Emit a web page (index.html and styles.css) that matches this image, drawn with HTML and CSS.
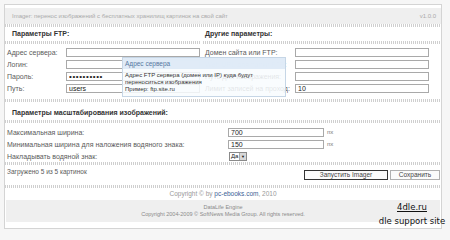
FILE: index.html
```html
<!DOCTYPE html>
<html>
  <head>
    <meta charset="utf-8">
    <link rel="stylesheet" href="styles.css">
  </head>

  <body>
    <div class="panel">
      <div class="head">
        <span>Imager: перенос изображений с бесплатных хранилищ картинок на свой сайт</span>
        <span>v1.0.0</span>
      </div>
      <div class="dots"></div>

      <div class="cols">
        <div class="col col-ftp">
          <div class="title">Параметры FTP:</div>
          <div class="dots"></div>
          <div class="rows">
            <div class="row"><label>Адрес сервера:</label><input type="text" class="field"></div>
            <div class="row"><label>Логин:</label><input type="text" class="field"></div>
            <div class="row"><label>Пароль:</label><input type="password" class="field pass" value="1234567890"></div>
            <div class="row"><label>Путь:</label><input type="text" class="field" value="users"></div>
          </div>
        </div>

        <div class="col col-other">
          <div class="title">Другие параметры:</div>
          <div class="dots"></div>
          <div class="rows">
            <div class="row"><label>Домен сайта или FTP:</label><input type="text" class="field"></div>
            <div class="row"><label>Web URL для папки FTP:</label><input type="text" class="field"></div>
            <div class="row"><label>Путь для изображения:</label><input type="text" class="field"></div>
            <div class="row"><label>Лимит записей на проход:</label><input type="text" class="field" value="10"></div>
          </div>
        </div>
      </div>

      <div class="dots gap"></div>

      <div class="title title-wide">Параметры масштабирования изображений:</div>
      <div class="dots"></div>
      <div class="rows rows-wide">
        <div class="row"><label>Максимальная ширина:</label><input type="text" class="field" value="700"><span class="unit">пх</span></div>
        <div class="row"><label>Минимальная ширина для наложения водяного знака:</label><input type="text" class="field" value="150"><span class="unit">пх</span></div>
        <div class="row">
          <label>Накладывать водяной знак:</label>
          <div class="select"><span class="select-value">Да</span><span class="select-arrow">&#9660;</span></div>
        </div>
      </div>

      <div class="dots"></div>
      <div class="status">
        <span class="status-text">Загружено 5 из 5 картинок</span>
        <div class="actions">
          <button class="btn btn-main">Запустить Imager</button>
          <button class="btn">Сохранить</button>
        </div>
      </div>
      <div class="dots"></div>

      <div class="copy">Copyright © by <a href="#">pc-ebooks.com</a>, 2010</div>
      <div class="footer">
        <div>DataLife Engine</div>
        <div>Copyright 2004-2009 © SoftNews Media Group. All rights reserved.</div>
      </div>
    </div>

    <!-- hint popup over the form -->
    <div class="hint">
      <div class="hint-head">Адрес сервера</div>
      <div class="hint-body">
        <div class="nowrap">Адрес FTP сервера (домен или IP) куда будут</div>
        <div>переноситься изображения</div>
        <div>Пример: ftp.site.ru</div>
      </div>
    </div>

    <div class="mark">
      <div class="mark-link">4dle.ru</div>
      <div>dle support site</div>
    </div>
  </body>
</html>
```

FILE: styles.css
```css
body {
  margin: 0;
  background-color: #f6f6f6;
  font-family: "Liberation Sans", Arial, sans-serif;
  font-size: 7px;
  color: #5a5a5a;
}

.panel {
  width: 436px;
  margin: 4px 0 0 4px;
  padding: 3px 0 6px;
  background-color: #fff;
  border: 1px solid #d4d4d4;
}

.head {
  display: flex;
  justify-content: space-between;
  align-items: center;
  height: 16px;
  padding: 0 5px 0 7px;
  background-color: #efefef;
  font-size: 6px;
  color: #aaa;
}

.dots {
  height: 3px;
  background: repeating-linear-gradient(90deg, #cfcfcf 0 1px, #fff 1px 2px);
}

.dots.gap {
  margin-top: 5px;
}

.cols {
  display: grid;
  grid-template-columns: 195px 238px;
  column-gap: 3px;
}

.title {
  height: 14px;
  line-height: 14px;
  font-weight: bold;
  color: #333;
}

.col-ftp .title {
  padding-left: 7px;
}

.col-other .title {
  padding-left: 2px;
}

.title-wide {
  margin-top: 3px;
  height: 15px;
  line-height: 15px;
  padding-left: 7px;
}

.rows {
  margin-top: 2px;
}

.rows-wide {
  margin-top: 3px;
}

.row {
  display: flex;
  align-items: center;
  height: 12px;
}

.row label {
  box-sizing: border-box;
  padding-left: 2px;
}

.col-ftp .row label {
  width: 61px;
}

.col-other .row label {
  width: 92px;
}

.rows-wide .row label {
  width: 223px;
}

.field {
  box-sizing: border-box;
  width: 134px;
  height: 9px;
  margin: 0;
  padding: 0 2px;
  border: 1px solid #a9a9a9;
  background-color: #fff;
  font-family: "Liberation Sans", Arial, sans-serif;
  font-size: 7px;
  color: #222;
  outline: none;
}

.pass {
  font-size: 8px;
  letter-spacing: 0.6px;
}

.rows-wide .field {
  width: 96px;
}

.unit {
  margin-left: 3px;
  font-size: 6px;
  color: #777;
}

.select {
  display: flex;
  box-sizing: border-box;
  width: 18px;
  height: 9px;
  margin-left: 1px;
  border: 1px solid #8a8a8a;
  background-color: #fff;
}

.select-value {
  flex: 1;
  padding-left: 1px;
  font-size: 6px;
  line-height: 7px;
  color: #222;
}

.select-arrow {
  width: 6px;
  background-color: #d8d8d8;
  border-left: 1px solid #aaa;
  font-size: 4px;
  line-height: 7px;
  text-align: center;
  color: #111;
}

.status {
  display: flex;
  justify-content: space-between;
  height: 20px;
  padding: 0 1px 0 2px;
}

.status-text {
  margin-top: 2px;
  line-height: 9px;
  font-size: 6.5px;
}

.actions {
  display: flex;
  gap: 2px;
  margin-top: 5px;
}

.btn {
  box-sizing: border-box;
  height: 10px;
  padding: 0;
  border: 1px solid #b0b0b0;
  background-color: #fbfbfb;
  font-family: "Liberation Sans", Arial, sans-serif;
  font-size: 6.5px;
  line-height: 8px;
  color: #444;
}

.btn-main {
  width: 84px;
  border-color: #333;
}

.btn:last-child {
  width: 50px;
}

.copy {
  height: 11px;
  line-height: 11px;
  text-align: center;
  font-size: 6.5px;
  color: #999;
}

.copy a {
  color: #3d5f96;
  text-decoration: none;
}

.footer {
  margin: 1px 1px 0;
  padding: 4px 0;
  background-color: #efefef;
  text-align: center;
  font-size: 5.5px;
  line-height: 7px;
  color: #8a8a8a;
}

.hint {
  position: absolute;
  left: 122px;
  top: 57px;
  width: 162px;
  height: 38px;
  border: 1px solid #c6d6e6;
  background-color: rgba(248, 251, 254, 0.86);
  font-size: 6px;
}

.hint-head {
  height: 11px;
  line-height: 11px;
  padding-left: 2px;
  background-color: rgba(222, 234, 247, 0.95);
  font-size: 6.5px;
  color: #5677a0;
}

.hint-body {
  padding: 3px 0 0 2px;
  line-height: 7px;
  color: #333;
}

.nowrap {
  white-space: nowrap;
}

.mark {
  position: absolute;
  left: 367px;
  top: 200px;
  width: 90px;
  text-align: center;
  font-family: "DejaVu Sans", sans-serif;
  font-size: 8.5px;
  line-height: 14px;
  color: #111;
}

.mark-link {
  text-decoration: underline;
}
```
